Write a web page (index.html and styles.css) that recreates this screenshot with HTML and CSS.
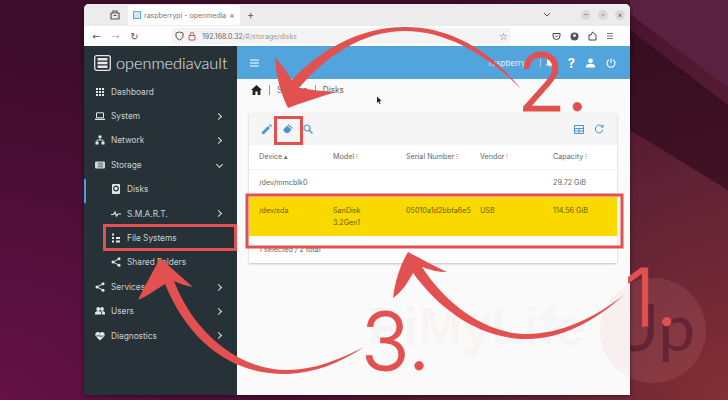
FILE: index.html
```html
<!DOCTYPE html>
<html>
<head>
<meta name="viewport" content="width=device-width, initial-scale=1">
<link rel="stylesheet" href="styles.css">
</head>
<body>
<div class="desktop">
  <svg class="wall" width="728" height="400" viewBox="0 0 728 400">
    <polygon points="630,14 728,88 728,0 630,0" fill="#5a2140"/>
    <polygon points="630,30 728,105 728,190 630,130" fill="#2a0818" opacity="0.6"/>
  </svg>

  <div class="mark-circle"><span>Up</span></div>

  <div class="window">
    <div class="tabbar">
      <svg class="tab-box" width="10" height="10" viewBox="0 0 10 10"><path d="M1 3h8v6H1zM3 3V1h4v2M3.500 5.500h3" fill="none" stroke="#555" stroke-width="1.200"/></svg>
      <div class="tab">
        <span class="favicon"></span>
        <span class="tab-title">raspberrypi - openmedia</span>
        <span class="tab-x">×</span>
      </div>
      <span class="tab-plus">+</span>
      <svg class="tab-list" width="8" height="6" viewBox="0 0 8 6"><path d="M1 1l3 3 3-3" fill="none" stroke="#555" stroke-width="1"/></svg>
      <div class="winbtns">
        <span class="winbtn">–</span>
        <span class="winbtn">▫</span>
        <span class="winbtn">×</span>
      </div>
    </div>
    <div class="navbar">
      <span class="nav-ic">←</span>
      <span class="nav-ic faint">→</span>
      <span class="nav-ic">↻</span>
      <div class="urlbar">
        <svg width="9" height="10" viewBox="0 0 9 10"><path d="M4.500 1l3.500 1v3c0 2-1.500 3-3.500 4C2.500 8 1 7 1 5V2z" fill="none" stroke="#555"/></svg>
        <svg width="8" height="10" viewBox="0 0 8 10"><path d="M1 4.500h6V9H1zM2.300 4.500V3a1.700 1.700 0 013.400 0v1.500" fill="none" stroke="#b5656f"/></svg>
        <span class="url"><b>192.168.0.32</b>/#/storage/disks</span>
        <span class="star">☆</span>
      </div>
      <div class="nav-right">
        <svg width="9" height="9" viewBox="0 0 9 9"><path d="M1 1.500h7V4a3.500 3.500 0 01-7 0zM3 3.500l1.500 1.500L6 3.500" fill="none" stroke="#444"/></svg>
        <svg width="9" height="9" viewBox="0 0 9 9"><circle cx="4.500" cy="4.500" r="4" fill="#555"/><circle cx="4.500" cy="3.500" r="1.500" fill="#eee"/></svg>
        <svg width="9" height="10" viewBox="0 0 9 10"><path d="M1 4h2l1.500-3L8 4v5H1z" fill="none" stroke="#444"/></svg>
        <svg width="8" height="8" viewBox="0 0 8 8"><path d="M1 1.500h6M1 4h6M1 6.500h6" stroke="#777"/></svg>
      </div>
    </div>

    <div class="app">
      <aside class="sidebar">
        <div class="logo">
          <svg width="17" height="16" viewBox="0 0 17 16"><rect x="0.700" y="0.700" width="15.600" height="14.600" rx="2" fill="none" stroke="#e4e6e7" stroke-width="1.300"/><path d="M3.500 4.200h10M3.500 8h10M3.500 11.800h10" stroke="#e4e6e7" stroke-width="2.600"/></svg>
          <span>openmediavault</span>
        </div>
        <ul class="menu">
          <li><svg class="ic" viewBox="0 0 10 10"><path d="M1 1h2v2H1zM4 1h2v2H4zM7 1h2v2H7zM1 4h2v2H1zM4 4h2v2H4zM7 4h2v2H7zM1 7h2v2H1zM4 7h2v2H4zM7 7h2v2H7z" fill="#e4e6e7"/></svg>Dashboard</li>
          <li><svg class="ic" viewBox="0 0 10 10"><path d="M1.500 1.800h7v5h-7z" fill="none" stroke="#e4e6e7"/><path d="M0 8.300h10" stroke="#e4e6e7" stroke-width="1.200"/></svg>System<i class="chev"></i></li>
          <li><svg class="ic" viewBox="0 0 10 10"><path d="M3.500 0.500h3v2.500h-3zM0.500 6.500h3V9.500h-3zM6.500 6.500h3V9.500h-3z" fill="#e4e6e7"/><path d="M5 3v2M2 6.500V5h6v1.500" fill="none" stroke="#e4e6e7" stroke-width="0.800"/></svg>Network<i class="chev"></i></li>
          <li><svg class="ic" viewBox="0 0 10 10"><rect x="0" y="1.500" width="10" height="7" rx="1" fill="#cfd3d5"/><path d="M3 3.200h5M3 5h5M3 6.800h5" stroke="#3a464d" stroke-width="0.700"/></svg>Storage<i class="chev down"></i></li>
          <li class="sub active"><svg class="ic" viewBox="0 0 10 10"><rect x="1" y="0" width="8" height="10" rx="1" fill="#e4e6e7"/><circle cx="5" cy="4.500" r="2.300" fill="none" stroke="#263238" stroke-width="1.200"/></svg>Disks</li>
          <li class="sub"><svg class="ic" viewBox="0 0 10 10"><path d="M0 5.500h2.500L4 3l1.500 4L7 5h3" fill="none" stroke="#e4e6e7" stroke-width="1.200"/></svg>S.M.A.R.T.<i class="chev"></i></li>
          <li class="sub"><svg class="ic" viewBox="0 0 10 10"><path d="M1 0.500h2v2H1zM1 4h2v2H1zM1 7.500h2v2H1zM5 4h4v2H5zM5 7.500h4v2H5z" fill="#e4e6e7"/></svg>File Systems</li>
          <li class="sub"><svg class="ic" viewBox="0 0 10 10"><circle cx="8" cy="1.800" r="1.500" fill="#e4e6e7"/><circle cx="2" cy="5" r="1.500" fill="#e4e6e7"/><circle cx="8" cy="8.200" r="1.500" fill="#e4e6e7"/><path d="M8 1.800L2 5l6 3.200" fill="none" stroke="#e4e6e7"/></svg>Shared Folders</li>
          <li><svg class="ic" viewBox="0 0 10 10"><circle cx="8" cy="1.800" r="1.500" fill="#e4e6e7"/><circle cx="2" cy="5" r="1.500" fill="#e4e6e7"/><circle cx="8" cy="8.200" r="1.500" fill="#e4e6e7"/><path d="M8 1.800L2 5l6 3.200" fill="none" stroke="#e4e6e7"/></svg>Services<i class="chev"></i></li>
          <li><svg class="ic" viewBox="0 0 10 10"><circle cx="3.200" cy="3" r="1.900" fill="#e4e6e7"/><circle cx="7" cy="3" r="1.900" fill="#e4e6e7"/><path d="M0 8.500V7c0-1.200 1.500-2 3.200-2s3 .8 3 2v1.500zM7 8.500V7c0-.8-.2-1.300-.6-1.900 1.800-.2 3.600.6 3.600 1.900v1.500z" fill="#e4e6e7"/></svg>Users<i class="chev"></i></li>
          <li><svg class="ic" viewBox="0 0 10 10"><path d="M5 9.500L1 5.500C-.5 3.800.5 1 2.800 1 3.800 1 4.500 1.500 5 2.200 5.500 1.500 6.200 1 7.200 1c2.300 0 3.300 2.800 1.800 4.500z" fill="#e4e6e7"/><path d="M1 5h2.500L4.500 3.800 5.500 6l1-1h2" fill="none" stroke="#263238" stroke-width="0.700"/></svg>Diagnostics<i class="chev"></i></li>
        </ul>
      </aside>

      <main class="content">
        <header class="topbar">
          <svg class="burger" width="9" height="8" viewBox="0 0 9 8"><path d="M0 1h9M0 4h9M0 7h9" stroke="#fff" stroke-width="1.200"/></svg>
          <div class="top-right">
            <span class="top-user">raspberry</span>
            <span class="top-sep"></span>
            <svg width="10" height="11" viewBox="0 0 10 11"><path d="M5 1c-2 0-3 1.500-3 3.500V7L1 8.500h8L8 7V4.500C8 2.500 7 1 5 1zM4 9.500h2V10H4z" fill="#fff"/></svg>
            <span class="top-q">?</span>
            <svg width="11" height="10" viewBox="0 0 11 10"><circle cx="5.500" cy="2.800" r="2.400" fill="#fff"/><path d="M1 9.500V8c0-1.500 2.500-2.300 4.500-2.300S10 6.500 10 8v1.500z" fill="#fff"/></svg>
            <svg width="10" height="10" viewBox="0 0 10 10"><path d="M5 .5v4.500" stroke="#fff" stroke-width="1.100"/><path d="M3 1.800a4 4 0 104 0" fill="none" stroke="#fff" stroke-width="1.100"/></svg>
          </div>
        </header>

        <nav class="crumbs">
          <svg width="11" height="10" viewBox="0 0 11 10"><path d="M5.500 0L0 5h1.600v5h2.800V6.500h2.200V10h2.800V5H11z" fill="#222"/></svg>
          <span class="crumb-sep"></span>
          <span>Storage</span>
          <span class="crumb-sep"></span>
          <span>Disks</span>
        </nav>

        <section class="card">
          <div class="card-tools">
            <svg width="10" height="10" viewBox="0 0 10 10"><path d="M0 10V8l6-6 2 2-6 6zM7 1l1-1 2 2-1 1z" fill="#4a95cd"/></svg>
            <svg class="eraser" width="11" height="10" viewBox="0 0 11 10"><path d="M1 6l4.500-5 1-.5 4 3.300-.3 1L6.500 9H3.500z" fill="#4a95cd"/><path d="M5.200 1.500l4.800 3.700" stroke="#fff" stroke-width="1"/></svg>
            <svg width="10" height="10" viewBox="0 0 10 10"><circle cx="4" cy="4" r="3" fill="none" stroke="#4a95cd" stroke-width="1.200"/><path d="M6.200 6.200L9.500 9.500" stroke="#4a95cd" stroke-width="1.400"/></svg>
            <span class="spacer"></span>
            <svg width="10" height="9" viewBox="0 0 10 9"><path d="M.5.500h9v8h-9zM.5 3.500h9M5 3.500v5M.5 6h9" fill="none" stroke="#4a95cd"/></svg>
            <svg width="10" height="10" viewBox="0 0 10 10"><path d="M8.500 2.500A4 4 0 105 9a4 4 0 003.800-3" fill="none" stroke="#4a95cd"/><path d="M9.500 .5v3h-3z" fill="#4a95cd"/></svg>
          </div>
          <div class="row head">
            <span>Device ▴</span><span>Model ⁝</span><span>Serial Number ⁝</span><span>Vendor ⁝</span><span>Capacity ⁝</span>
          </div>
          <div class="row">
            <span>/dev/mmcblk0</span><span></span><span></span><span></span><span>29.72 GiB</span>
          </div>
          <div class="row selected">
            <span>/dev/sda</span><span>SanDisk<br>3.2Gen1</span><span>05010a1d2bbfa6e5</span><span>USB</span><span>114.56 GiB</span>
          </div>
          <div class="card-foot">1 selected / 2 total</div>
        </section>
      </main>
    </div>
    <div class="mark-pale"></div>
  </div>

  <div class="mark-text"><span>Pi</span><span class="mark-pink">My</span><span>Life</span></div>

  <svg class="marks" width="728" height="400" viewBox="0 0 728 400">
    <path d="M377 96.500v6.500l1.500-1.400 1.100 2.500 1-.4-1.100-2.500 2.100-.1z" fill="#222"/>
    <g fill="none" stroke="#e25050" stroke-width="3">
      <rect x="104.500" y="225.500" width="131" height="24"/>
      <rect x="275.500" y="117.500" width="26" height="26"/>
      <rect x="247" y="195" width="375" height="52"/>
    </g>
    <g fill="#e25050">
      <path d="M521 89C490 50 450 27 405 27C360 27 320 50 292 80C287 72 280 63 275 57C276 75 280 92 288 108C303 102 320 97 336 92C323 91 311 90 299 88C325 57 362 31 405 31C448 31 490 57 521 89z"/>
      <path d="M364 347C340 363 315 373 287 374C235 375 190 345 165 284C158 288 148 296 138 300C145 285 153 272 160 258C172 268 182 278 193 287C186 286 180 284 174 281C195 335 240 370 287 370C315 370 340 359 364 347z"/>
      <path d="M625 294C595 322 560 339 527 339C480 339 440 310 413 273C408 282 402 292 393 298C395 282 400 265 408 252C420 258 434 266 447 272C438 272 430 270 422 267C445 303 485 334 527 334C560 334 595 318 625 294z"/>
    </g>
  </svg>
  <span class="num n1">1.</span>
  <span class="num n2">2.</span>
  <span class="num n3">3.</span>
</div>
</body>
</html>
```
FILE: styles.css
```css
* {
  box-sizing: border-box;
}

html, body {
  margin: 0;
  padding: 0;
}

body {
  font-family: "Inter", "Liberation Sans", sans-serif;
}

.desktop {
  position: relative;
  width: 728px;
  height: 400px;
  overflow: hidden;
  background:
    radial-gradient(circle at 760px 430px, #8a3236 0, #5f2135 30%, rgba(60, 12, 40, 0) 60%),
    radial-gradient(circle at 0 420px, rgba(120, 20, 85, 0.7) 0, rgba(120, 20, 85, 0) 45%),
    #3d0c2a;
}

.wall {
  position: absolute;
  left: 0;
  top: 0;
}

/* browser window */
.window {
  position: absolute;
  left: 84px;
  top: 4px;
  width: 546px;
  height: 391px;
  display: flex;
  flex-direction: column;
  border-radius: 5px 5px 0 0;
  overflow: hidden;
  background: #fafafa;
  box-shadow: 0 1px 4px rgba(0, 0, 0, 0.5);
}

.tabbar {
  height: 22px;
  background: #ececec;
  display: flex;
  align-items: center;
  padding-left: 26px;
  font-size: 7px;
  color: #666;
}

.tab {
  width: 112px;
  height: 20px;
  margin-left: 8px;
  background: #fff;
  border-radius: 3px;
  display: flex;
  align-items: center;
  padding: 0 6px 0 5px;
  gap: 3px;
}

.favicon {
  width: 8px;
  height: 8px;
  flex: none;
  border: 1.500px solid #5aa9dc;
  background: #d5e8f5;
}

.tab-title {
  flex: 1;
  white-space: nowrap;
  font-size: 7px;
  color: #777;
}

.tab-x {
  font-size: 8px;
}

.tab-plus {
  margin-left: 7px;
  font-size: 11px;
  color: #555;
}

.tab-list {
  margin-left: auto;
}

.winbtns {
  display: flex;
  gap: 7px;
  margin: 0 5px 0 30px;
}

.winbtn {
  width: 10px;
  height: 10px;
  border-radius: 50%;
  background: #d9d9d9;
  color: #555;
  font-size: 7px;
  line-height: 10px;
  text-align: center;
}

.navbar {
  height: 20px;
  background: #fff;
  display: flex;
  align-items: center;
  padding-left: 7px;
  color: #555;
}

.nav-ic {
  width: 11px;
  margin-right: 8px;
  font-size: 10px;
  text-align: center;
  font-family: "DejaVu Sans", sans-serif;
}

.nav-ic.faint {
  color: #bbb;
}

.urlbar {
  width: 339px;
  height: 16px;
  margin-left: 24px;
  background: #f4f4f4;
  border-radius: 3px;
  display: flex;
  align-items: center;
  padding: 0 3px;
  gap: 4px;
}

.url {
  margin-left: 2px;
  flex: 1;
  font-size: 7px;
  color: #999;
}

.url b {
  font-weight: 400;
  color: #666;
}

.star {
  font-size: 10px;
  font-family: "DejaVu Sans", sans-serif;
}

.nav-right {
  display: flex;
  align-items: center;
  gap: 9px;
  margin-left: 41px;
}

.app {
  flex: 1;
  display: flex;
  min-height: 0;
}

/* openmediavault side menu */
.sidebar {
  width: 153px;
  flex: none;
  background: #263238;
  color: #ccd0d2;
  font-size: 8.300px;
}

.logo {
  height: 33px;
  display: flex;
  align-items: center;
  gap: 5px;
  padding-left: 10px;
  color: #e9ebec;
  font-size: 16.300px;
  font-weight: 300;
  font-family: "Lato", sans-serif;
}

.menu {
  list-style: none;
  margin: 0.500px 0 0;
  padding: 0;
}

.menu li {
  position: relative;
  height: 24.400px;
  display: flex;
  align-items: center;
  padding-left: 11px;
}

.menu li.sub {
  padding-left: 27px;
}

.menu li.active::before {
  content: "";
  position: absolute;
  left: 0;
  top: 2px;
  width: 2px;
  height: 24px;
  background: #4f9fd4;
}

.ic {
  width: 10px;
  height: 10px;
  margin-right: 6px;
  flex: none;
}

.chev {
  position: absolute;
  left: 132px;
  top: 10px;
  width: 5px;
  height: 5px;
  border-top: 1.300px solid #ddd;
  border-right: 1.300px solid #ddd;
  transform: rotate(45deg);
}

.chev.down {
  left: 133px;
  top: 9px;
  transform: rotate(135deg);
}

/* right side */
.content {
  flex: 1;
  display: flex;
  flex-direction: column;
  min-width: 0;
}

.topbar {
  height: 33px;
  flex: none;
  background: #52a4dc;
  display: flex;
  align-items: center;
  padding: 0 14px 0 13px;
}

.top-right {
  margin-left: auto;
  display: flex;
  align-items: center;
  gap: 10px;
  color: #e2f0fa;
  font-size: 8px;
}

.top-user {
  margin-right: 4px;
}

.top-sep {
  width: 1px;
  height: 8px;
  margin-right: -6px;
  background: #a8d0ec;
}

.top-q {
  margin-left: 3px;
  font-size: 13px;
  font-weight: 700;
  color: #fff;
}

.crumbs {
  height: 22px;
  flex: none;
  display: flex;
  align-items: center;
  gap: 7px;
  padding-left: 14px;
  font-size: 8.300px;
  color: #666;
}

.crumb-sep {
  width: 1px;
  height: 10px;
  background: #999;
}

.card {
  margin: 12px 13px 0 12px;
  background: #fff;
  box-shadow: 0 1px 2px rgba(0, 0, 0, 0.25);
  font-size: 7.200px;
  color: #666;
}

.card-tools {
  height: 32px;
  background: #f5f5f5;
  display: flex;
  align-items: center;
  gap: 10px;
  padding: 0 13px;
}

.spacer {
  flex: 1;
}

.row {
  display: grid;
  grid-template-columns: 74px 73px 74px 73px 1fr;
  padding: 0 0 0 10px;
  height: 27px;
  align-items: center;
  line-height: 12px;
  border-bottom: 1px solid #f2f2f2;
}

.row.head {
  height: 25px;
}

.row.selected {
  height: 39px;
  background: #fad900;
  color: #6b5c00;
  border-bottom: 0;
  align-items: start;
  padding-top: 8px;
}

.card-foot {
  height: 27px;
  padding: 9px 0 0 10px;
}

/* watermark and annotations */
.mark-text {
  position: absolute;
  left: 368px;
  top: 296px;
  font-size: 53px;
  font-weight: 700;
  color: rgba(120, 120, 125, 0.04);
  font-family: "Liberation Sans", sans-serif;
}

.mark-pink {
  color: rgba(226, 80, 80, 0.04);
}

.mark-circle {
  position: absolute;
  left: 600px;
  top: 278px;
  width: 106px;
  height: 105px;
  border-radius: 50%;
  background: rgba(235, 150, 150, 0.14);
  text-align: center;
  line-height: 96px;
  font-size: 66px;
  color: rgba(50, 8, 30, 0.4);
  font-family: "Lato", sans-serif;
}

.mark-pale {
  position: absolute;
  left: 516px;
  top: 274px;
  width: 106px;
  height: 105px;
  border-radius: 50%;
  background: rgba(226, 80, 80, 0.06);
}

.marks {
  position: absolute;
  left: 0;
  top: 0;
}

.num {
  position: absolute;
  font-size: 80px;
  line-height: 80px;
  font-weight: 300;
  color: #e25050;
  -webkit-text-stroke: 0.8px #e25050;
  font-family: "Inter", sans-serif;
}

.n1 {
  left: 624px;
  top: 257px;
}

.n2 {
  left: 517px;
  top: 42px;
}

.n3 {
  left: 361px;
  top: 301px;
}
```
